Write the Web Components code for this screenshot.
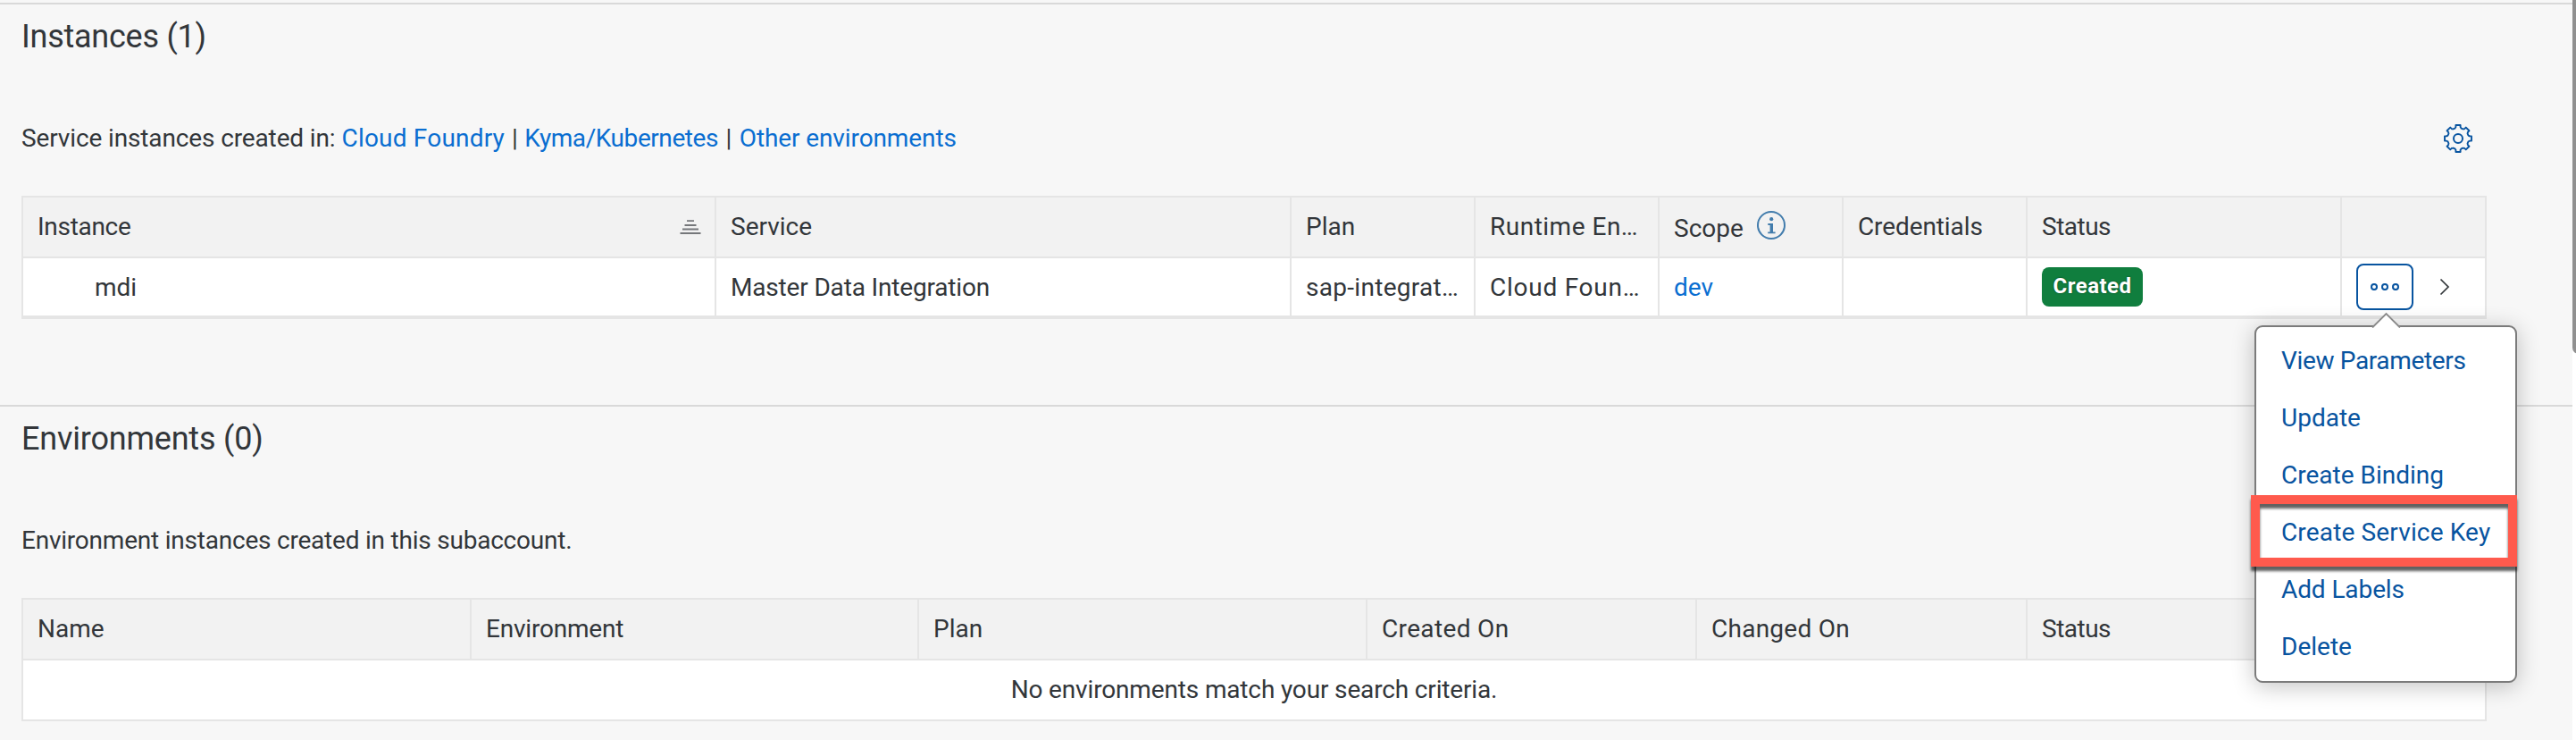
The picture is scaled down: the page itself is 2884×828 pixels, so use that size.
<!DOCTYPE html>
<html lang="en">
<head>
<meta charset="utf-8">
<title>Instances</title>
<style>
html,body{margin:0;height:100%;overflow:hidden}
body{background:#f7f7f7;color:#32363a;font:28px/36px Roboto,"Liberation Sans",sans-serif}
</style>
</head>
<body>
<service-page></service-page>
<script>
const define = (name, html, setup) => customElements.define(name, class extends HTMLElement {
  constructor() {
    super();
    const t = document.createElement('template');
    t.innerHTML = html;
    this.attachShadow({mode: 'open'}).append(t.content.cloneNode(true));
  }
  connectedCallback() { if (setup) setup(this, this.shadowRoot); }
});

/* Outline gear with eight teeth */
const gearPath = (() => {
  let d = '';
  for (let i = 0; i < 8; i++) {
    const a = i * Math.PI / 4;
    const p = (r, t) => (16 + r * Math.cos(a) - t * Math.sin(a)).toFixed(2) + ' ' + (16 + r * Math.sin(a) + t * Math.cos(a)).toFixed(2);
    d += (i ? 'L' : 'M') + p(11.4, -3.5) + 'Q' + p(12.6, -3) + ' ' + p(12.7, -2.6) + 'L' + p(15, -2.6) + 'L' + p(15, 2.6) + 'L' + p(12.7, 2.6) + 'Q' + p(12.6, 3) + ' ' + p(11.4, 3.5);
  }
  return d + 'Z';
})();

const icons = {
  gear: [32, 32, `<path d="${gearPath}" fill="none" stroke="#0854a0" stroke-width="1.9" stroke-linejoin="round"/><circle cx="16" cy="16" r="5" fill="none" stroke="#0854a0" stroke-width="2"/>`],
  sort: [24, 16, '<path d="M8 1.2h8M5.5 6h13M3 10.500h18M.5 15h23" stroke="#75777a" stroke-width="1.8"/>'],
  info: [32, 32, '<g fill="#427cac"><circle cx="16" cy="16" r="15" fill="none" stroke="#427cac" stroke-width="2"/><circle cx="16.2" cy="9.2" r="2.1"/><path d="M12.3 14H18v9.4h2.6v1.9h-8.4v-1.9h2.4v-7.5h-2.3z"/></g>'],
  more: [32, 8, '<g fill="none" stroke="#0854a0" stroke-width="2"><circle cx="4" cy="4" r="3"/><circle cx="16" cy="4" r="3"/><circle cx="28" cy="4" r="3"/></g>'],
  next: [12, 20, '<path d="M1.5 1.5L10 10l-8.5 8.5" fill="none" stroke="#32363a" stroke-width="1.7"/>']
};
define('ui-icon', '<style>:host{display:block;flex:none}svg{display:block}</style>', (el, root) => {
  const [w, h, body] = icons[el.getAttribute('name')];
  root.innerHTML += `<svg width="${w}" height="${h}" viewBox="0 0 ${w} ${h}">${body}</svg>`;
});

define('ui-link', '<style>:host{display:inline;color:#0a6ed1}</style><slot></slot>');

define('ui-badge', `<style>:host{display:block;box-sizing:border-box;width:113px;height:44px;border-radius:8px;background:#107e3e;color:#fff;
  font-size:24px;font-weight:700;line-height:43px;text-align:center;text-shadow:0 0 2px rgba(0,0,0,.5);letter-spacing:.45px}</style><slot></slot>`);

define('more-button', `<style>:host{display:flex;align-items:center;justify-content:center;box-sizing:border-box;width:64px;height:52px;
  border:2px solid #0854a0;border-radius:8px;background:#fff}</style><ui-icon name="more"></ui-icon>`);

define('page-section', `<style>
  :host{display:block;box-sizing:border-box;height:450px;border-top:2px solid #d9d9d9;padding:0 100px 0 24px}
  .title{height:68px;box-sizing:border-box;padding-top:16px;font-size:36px;line-height:40px}
  .bar{display:flex;align-items:center;justify-content:space-between;height:64px;margin:50px 12px 32px 0}
  </style>
  <div class="title"><slot name="title"></slot></div>
  <div class="bar"><div><slot name="text"></slot></div><slot name="action"></slot></div>
  <slot></slot>`);

define('data-table', `<style>:host{display:block;box-sizing:border-box;width:2760px;border:2px solid #e5e5e5;background:#fff}
  :host([thick]){border-bottom-width:4px}</style><slot></slot>`);

define('table-row', `<style>
  :host{display:grid;grid-template-columns:var(--cols);height:64px}
  :host([head]){height:66px;background:#f2f2f2;border-bottom:2px solid #e5e5e5}
  :host([empty]){display:flex;align-items:center;justify-content:center;height:66px}
  </style><slot></slot>`);

define('table-cell', `<style>
  :host{display:flex;align-items:center;gap:16px;min-width:0;box-sizing:border-box;padding:1px 15px 0 16px;border-right:2px solid #e5e5e5;white-space:nowrap}
  :host([head]){padding:0 15px 0 16px}
  :host(:last-child){border-right:0}
  </style><slot></slot>`);

define('menu-item', `<style>:host{display:flex;align-items:center;height:64px;padding-left:28px;color:#0854a0;white-space:nowrap}</style><slot></slot>`);

define('action-menu', `<style>
  :host{position:absolute;left:2524px;top:364px;width:294px;height:400px;box-sizing:border-box;padding:6px 0 4px;
    border:2px solid #7b7b7b;border-radius:9px;background:#fff;box-shadow:0 4px 26px rgba(0,0,0,.24)}
  .arrow{position:absolute;left:129px;top:-17px}
  .mark{position:absolute;left:-6px;top:188px;width:298px;height:80px;box-sizing:border-box;border:10px solid #ff5a4d;
    filter:drop-shadow(0 5px 1.5px rgba(0,0,0,.62))}
  </style>
  <svg class="arrow" width="34" height="18" viewBox="0 0 34 18"><path d="M1 18L16.500 2 32 18z" fill="#fff"/><path d="M1 17.500L16.500 2 32 17.500" fill="none" stroke="#8a8a8a" stroke-width="1.900"/></svg>
  <slot></slot><div class="mark"></div>`);

define('scroll-bar', `<style>:host{position:absolute;right:0;top:0;width:4px;height:828px;background:#fff;overflow:hidden}
  div{width:14px;height:396px;background:#8f8f8f;border-radius:0 0 7px 7px}</style><div></div>`);

define('service-page', `<style>
  :host{display:block;position:relative;height:828px;box-sizing:border-box;padding-top:3px;overflow:hidden}
  .inst{--cols:776px 644px 206px 206px 206px 206px 352px 160px}
  .env{--cols:502px 501px 502px 369px 370px 512px}
  .grow{flex:1}
  </style>
  <page-section>
    <span slot="title" style="letter-spacing:-.25px">Instances (1)</span>
    <span slot="text"><span style="letter-spacing:-.13px">Service instances created in:</span> <ui-link style="letter-spacing:.2px;margin-left:0">Cloud Foundry</ui-link><span style="margin:0 .5px 0 1px"> | </span><ui-link style="letter-spacing:-.43px">Kyma/Kubernetes</ui-link><span style="margin:0 1.500px"> | </span><ui-link style="letter-spacing:-.1px">Other environments</ui-link></span>
    <ui-icon slot="action" name="gear" style="margin-right:4px"></ui-icon>
    <data-table class="inst" thick>
      <table-row head>
        <table-cell head><span class="grow" style="letter-spacing:-.3px">Instance</span><ui-icon name="sort"></ui-icon></table-cell>
        <table-cell head>Service</table-cell>
        <table-cell head>Plan</table-cell>
        <table-cell head><span style="letter-spacing:.5px">Runtime En…</span></table-cell>
        <table-cell head><span style="padding-top:3px">Scope</span><ui-icon name="info" style="margin:0 0 5px -1px"></ui-icon></table-cell>
        <table-cell head><span style="letter-spacing:-.1px">Credentials</span></table-cell>
        <table-cell head><span style="letter-spacing:-.5px">Status</span></table-cell>
        <table-cell head></table-cell>
      </table-row>
      <table-row>
        <table-cell><span style="padding-left:64px;padding-top:1px">mdi</span></table-cell>
        <table-cell><span style="letter-spacing:-.17px;padding-top:1px">Master Data Integration</span></table-cell>
        <table-cell><span style="letter-spacing:.3px;padding-top:1px">sap-integrat…</span></table-cell>
        <table-cell><span style="letter-spacing:.75px;padding-top:1px">Cloud Foun…</span></table-cell>
        <table-cell><ui-link style="padding-top:1px">dev</ui-link></table-cell>
        <table-cell></table-cell>
        <table-cell><ui-badge style="margin-bottom:1px">Created</ui-badge></table-cell>
        <table-cell style="gap:29px"><more-button style="margin-bottom:1px"></more-button><ui-icon name="next" style="margin-bottom:1px"></ui-icon></table-cell>
      </table-row>
    </data-table>
  </page-section>
  <page-section>
    <span slot="title" style="letter-spacing:-.2px">Environments (0)</span>
    <span slot="text" style="letter-spacing:-.22px">Environment instances created in this subaccount.</span>
    <data-table class="env">
      <table-row head>
        <table-cell head>Name</table-cell>
        <table-cell head><span style="letter-spacing:-.2px">Environment</span></table-cell>
        <table-cell head>Plan</table-cell>
        <table-cell head><span style="letter-spacing:.35px">Created On</span></table-cell>
        <table-cell head><span style="letter-spacing:.25px">Changed On</span></table-cell>
        <table-cell head><span style="letter-spacing:-.5px">Status</span></table-cell>
      </table-row>
      <table-row empty><span style="letter-spacing:-.15px">No environments match your search criteria.</span></table-row>
    </data-table>
  </page-section>
  <action-menu>
    <menu-item><span style="letter-spacing:-.35px">View Parameters</span></menu-item>
    <menu-item>Update</menu-item>
    <menu-item>Create Binding</menu-item>
    <menu-item><span style="letter-spacing:.15px">Create Service Key</span></menu-item>
    <menu-item><span style="letter-spacing:-.1px">Add Labels</span></menu-item>
    <menu-item>Delete</menu-item>
  </action-menu>
  <scroll-bar></scroll-bar>`);
</script>
</body>
</html>
